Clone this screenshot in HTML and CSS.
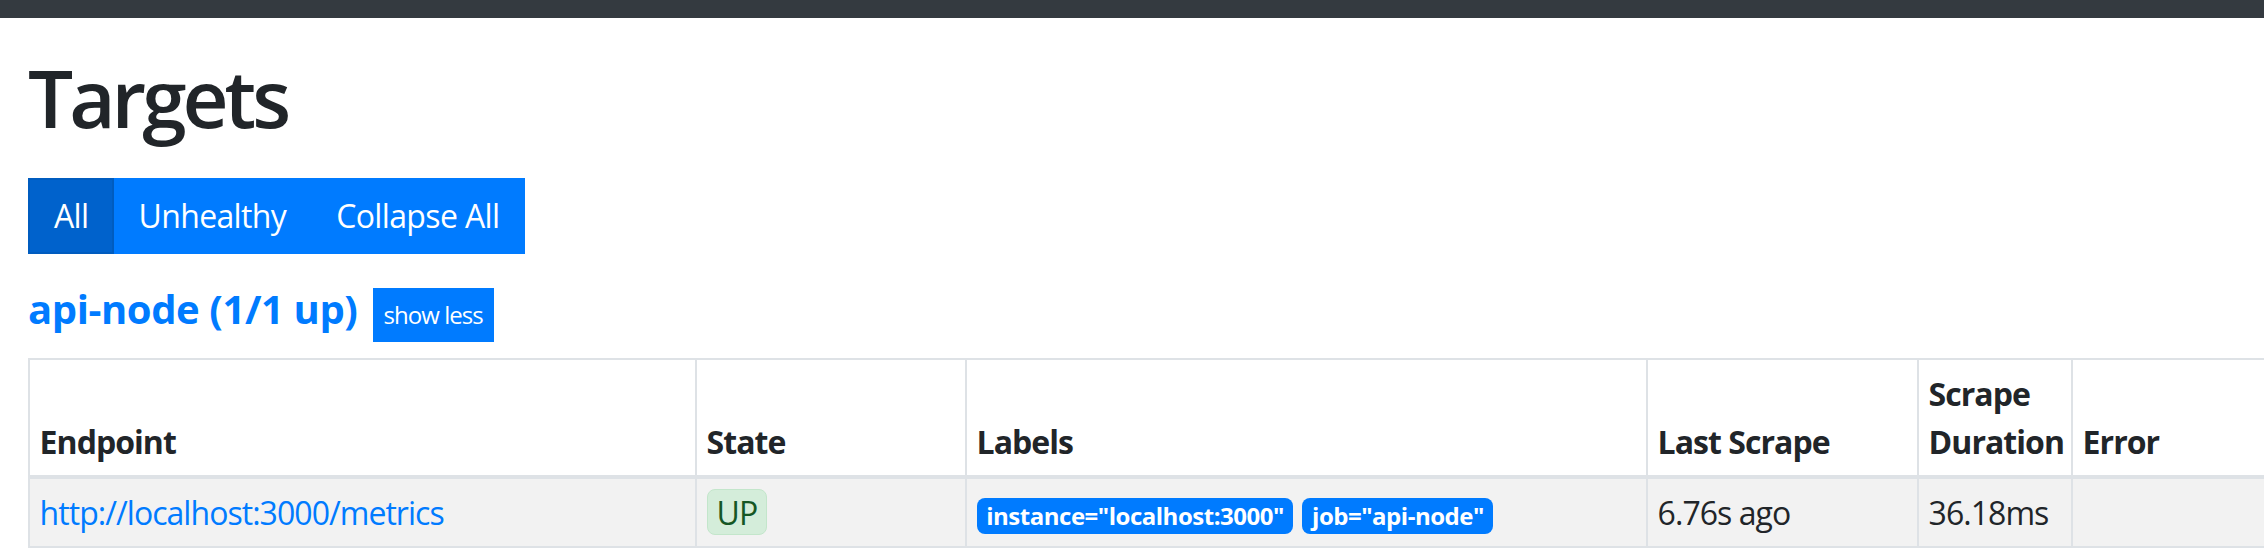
FILE: index.html
```html
<!DOCTYPE html>
<html lang="en">
<head>
<meta charset="utf-8">
<title>Targets</title>
<link rel="stylesheet" href="styles.css">
</head>
<body>
<div class="navbar"></div>
<div class="container">
  <h1 class="title">Targets</h1>
  <div class="btn-group">
    <button class="btn active">All</button>
    <button class="btn">Unhealthy</button>
    <button class="btn">Collapse All</button>
  </div>
  <div class="job-row">
    <a class="job-link" href="#api-node">api-node (1/1 up)</a>
    <button class="btn-xs">show less</button>
  </div>
  <table class="targets">
    <colgroup>
      <col class="c-endpoint">
      <col class="c-state">
      <col class="c-labels">
      <col class="c-last">
      <col class="c-dur">
      <col class="c-error">
    </colgroup>
    <thead>
      <tr>
        <th>Endpoint</th>
        <th>State</th>
        <th>Labels</th>
        <th>Last Scrape</th>
        <th>Scrape Duration</th>
        <th>Error</th>
      </tr>
    </thead>
    <tbody>
      <tr>
        <td><a class="endpoint" href="#metrics">http://localhost:3000/metrics</a></td>
        <td><span class="state-up">UP</span></td>
        <td><span class="label">instance="localhost:3000"</span><span class="label">job="api-node"</span></td>
        <td>6.76s ago</td>
        <td>36.18ms</td>
        <td></td>
      </tr>
    </tbody>
  </table>
</div>
</body>
</html>
```
FILE: styles.css
```css
html, body {
  margin: 0;
  padding: 0;
  overflow: hidden;
  background: #fff;
}
body {
  font-family: "Open Sans", "Noto Sans", sans-serif;
  font-size: 32px;
  line-height: 48px;
  color: #212529;
  letter-spacing: -0.03em;
}
.navbar {
  height: 18px;
  background: #343a40;
}
.container {
  padding: 0 28px;
}
.title {
  font-size: 80px;
  font-weight: 600;
  line-height: 96px;
  margin: 31px 0 0;
  letter-spacing: -4px;
}
.btn-group {
  display: flex;
  margin-top: 33px;
}
.btn {
  font: inherit;
  letter-spacing: -0.02em;
  color: #fff;
  background: #007bff;
  border: 2px solid #007bff;
  padding: 12px 24px;
  line-height: 48px;
  margin: 0 0 0 -2px;
  border-radius: 0;
}
.btn:first-child {
  margin-left: 0;
}
.btn.active {
  background: #0062cc;
  border-color: #005cbf;
  position: relative;
}
.job-row {
  display: flex;
  align-items: baseline;
  margin: 31px 0 16px;
}
.job-link {
  font-size: 40px;
  font-weight: 700;
  line-height: 48px;
  color: #007bff;
  text-decoration: none;
  margin-right: 15px;
  letter-spacing: -0.01em;
}
.btn-xs {
  font-family: inherit;
  letter-spacing: inherit;
  font-size: 24px;
  line-height: 36px;
  padding: 8px 10px;
  border: 1px solid #007bff;
  background: #007bff;
  color: #fff;
  border-radius: 0;
}
.targets {
  border-collapse: separate;
  border-spacing: 0;
  table-layout: fixed;
  width: 2345px;
  border-left: 2px solid #dee2e6;
  border-top: 2px solid #dee2e6;
}
.c-endpoint { width: 667px; }
.c-state { width: 270px; }
.c-labels { width: 681px; }
.c-last { width: 271px; }
.c-dur { width: 154px; }
.c-error { width: 300px; }
.targets th,
.targets td {
  box-sizing: border-box;
  padding: 9.6px;
  border-right: 2px solid #dee2e6;
  border-bottom: 2px solid #dee2e6;
  text-align: left;
  vertical-align: top;
}
.targets th {
  vertical-align: bottom;
  border-bottom-width: 4px;
  font-weight: 700;
  background: #fff;
}
.targets tbody tr {
  background: #f2f2f2;
}
.endpoint {
  color: #007bff;
  text-decoration: none;
}
.state-up {
  display: inline-block;
  padding: 7px 9px 6px;
  line-height: 31px;
  border: 1px solid #c3e6cb;
  border-radius: 8px;
  background: #d4edda;
  color: #155724;
}
.label {
  display: inline-block;
  padding: 6px 9.6px;
  font-size: 24px;
  font-weight: 700;
  line-height: 1;
  border-radius: 8px;
  background: #007bff;
  color: #fff;
  margin-right: 9px;
  letter-spacing: -0.02em;
}
```
